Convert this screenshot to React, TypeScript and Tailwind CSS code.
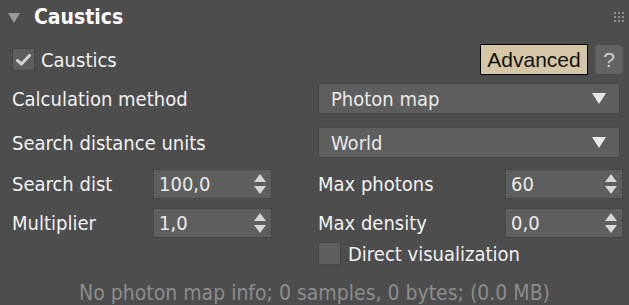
import React from "react";

const font = { fontFamily: '"DejaVu Sans Condensed", "DejaVu Sans", sans-serif' };
const arial = { fontFamily: '"Liberation Sans", Arial, sans-serif' };

function DropTri() {
  return (
    <svg width="14" height="11" viewBox="0 0 14 11">
      <polygon points="0,0 14,0 7,11" fill="#e8e8e8" />
    </svg>
  );
}

function Spinner({ value, w }: { value: string; w: string }) {
  return (
    <div className={`${w} h-[30px] bg-[#5e5e5e] border border-[#464646] flex items-center justify-between pl-[5px] pr-[5px]`}>
      <span className="text-[20px] text-[#eaeaea] leading-none">{value}</span>
      <svg width="12" height="20" viewBox="0 0 12 20">
        <polygon points="6,0 12,8 0,8" fill="#d8d8d8" />
        <polygon points="0,12 12,12 6,20" fill="#d8d8d8" />
      </svg>
    </div>
  );
}

function Dropdown({ value }: { value: string }) {
  return (
    <div className="w-[302px] h-[31px] bg-[#5e5e5e] border border-[#464646] flex items-center justify-between pl-[12px] pr-[13px]">
      <span className="text-[20px] text-[#eaeaea] leading-none">{value}</span>
      <DropTri />
    </div>
  );
}

export default function App() {
  return (
    <div className="w-[629px] h-[305px] bg-[#4d4d4d] text-[#f2f2f2] overflow-hidden relative" style={font}>
      {/* header */}
      <div className="h-[34px] flex items-center pl-[8px]">
        <svg width="12" height="10" viewBox="0 0 12 10" className="mt-[1px]">
          <polygon points="0,0 12,0 6,10" fill="#9a9a9a" />
        </svg>
        <span className="ml-[14px] text-[21px] font-bold text-white leading-none">Caustics</span>
        <div className="ml-auto mr-[5px] grid grid-cols-3 gap-[2px]">
          {Array.from({ length: 9 }).map((_, i) => (
            <div key={i} className="w-[2px] h-[2px] bg-[#8e8e8e]" />
          ))}
        </div>
      </div>
      {/* row 2 */}
      <div className="mt-[10px] h-[31px] flex items-center pl-[12px] pr-[6px]">
        <div className="w-[23px] h-[23px] bg-[#5e5e5e] border border-[#444] flex items-center justify-center">
          <svg width="15" height="12" viewBox="0 0 15 12">
            <path d="M1.5 6.5 L5.5 10 L13.5 1.5" stroke="#d4d4d4" strokeWidth="3" strokeLinecap="round" strokeLinejoin="round" fill="none" />
          </svg>
        </div>
        <span className="ml-[6px] text-[20px] leading-none">Caustics</span>
        <div
          className="ml-auto h-[31px] w-[108px] bg-[#d4c6a6] border border-black flex items-center justify-center text-[21px] text-[#111] leading-none"
          style={arial}
        >
          Advanced
        </div>
        <div
          className="ml-[7px] w-[28px] h-[29px] rounded-[4px] bg-[#636363] flex items-center justify-center text-[21px] text-[#d0d0d0] leading-none"
          style={arial}
        >
          ?
        </div>
      </div>
      {/* row 3 */}
      <div className="mt-[8px] h-[31px] flex items-center pl-[12px]">
        <span className="w-[306px] text-[20px] leading-none">Calculation method</span>
        <Dropdown value="Photon map" />
      </div>
      {/* row 4 */}
      <div className="mt-[13px] h-[31px] flex items-center pl-[12px]">
        <span className="w-[306px] text-[20px] leading-none">Search distance units</span>
        <Dropdown value="World" />
      </div>
      {/* row 5 */}
      <div className="mt-[11px] h-[30px] flex items-center pl-[12px]">
        <span className="w-[141px] text-[20px] leading-none">Search dist</span>
        <Spinner value="100,0" w="w-[119px]" />
        <span className="ml-[46px] w-[187px] text-[20px] leading-none">Max photons</span>
        <Spinner value="60" w="w-[118px]" />
      </div>
      {/* row 6 */}
      <div className="mt-[9px] h-[30px] flex items-center pl-[12px]">
        <span className="w-[141px] text-[20px] leading-none">Multiplier</span>
        <Spinner value="1,0" w="w-[119px]" />
        <span className="ml-[46px] w-[187px] text-[20px] leading-none">Max density</span>
        <Spinner value="0,0" w="w-[118px]" />
      </div>
      {/* row 7 */}
      <div className="mt-[4px] h-[23px] flex items-center pl-[318px]">
        <div className="w-[23px] h-[23px] bg-[#5e5e5e] border border-[#444]" />
        <span className="ml-[7px] text-[20px] leading-none">Direct visualization</span>
      </div>
      {/* footer */}
      <div className="mt-[18px] text-center text-[21px] text-[#8c8c8c] leading-none">
        No photon map info; 0 samples, 0 bytes; (0.0 MB)
      </div>
    </div>
  );
}
